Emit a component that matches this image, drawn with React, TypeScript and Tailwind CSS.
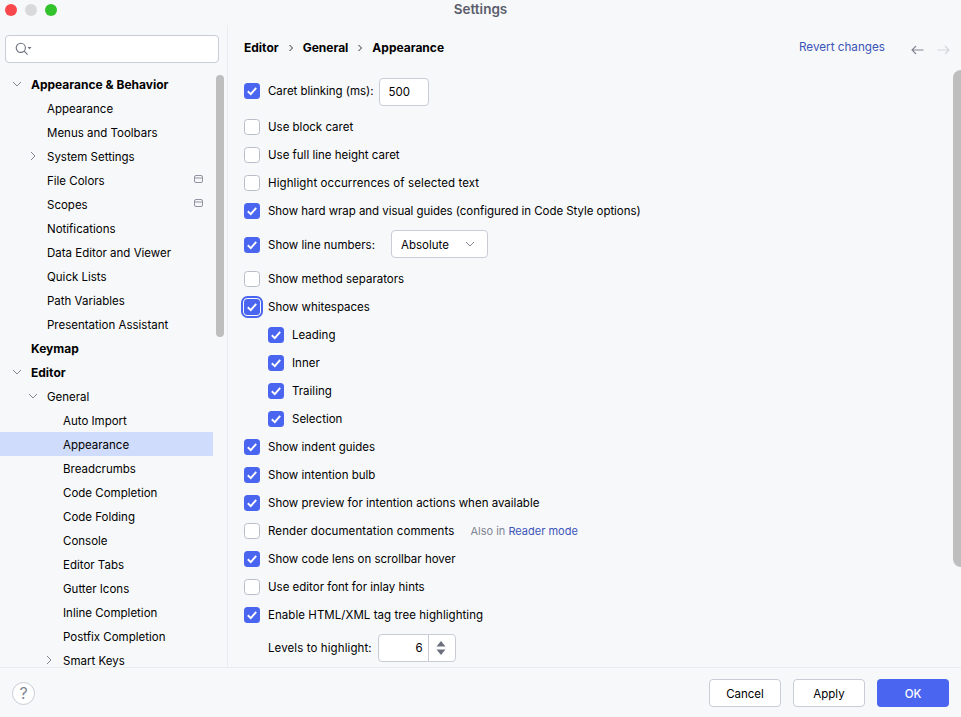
import React from "react";

type TreeRow = { label: string; level: 0 | 1 | 2; bold?: boolean; arrow?: "down" | "right"; pin?: boolean; selected?: boolean };

const tree: TreeRow[] = [
  { label: "Appearance & Behavior", level: 0, bold: true, arrow: "down" },
  { label: "Appearance", level: 1 },
  { label: "Menus and Toolbars", level: 1 },
  { label: "System Settings", level: 1, arrow: "right" },
  { label: "File Colors", level: 1, pin: true },
  { label: "Scopes", level: 1, pin: true },
  { label: "Notifications", level: 1 },
  { label: "Data Editor and Viewer", level: 1 },
  { label: "Quick Lists", level: 1 },
  { label: "Path Variables", level: 1 },
  { label: "Presentation Assistant", level: 1 },
  { label: "Keymap", level: 0, bold: true },
  { label: "Editor", level: 0, bold: true, arrow: "down" },
  { label: "General", level: 1, arrow: "down" },
  { label: "Auto Import", level: 2 },
  { label: "Appearance", level: 2, selected: true },
  { label: "Breadcrumbs", level: 2 },
  { label: "Code Completion", level: 2 },
  { label: "Code Folding", level: 2 },
  { label: "Console", level: 2 },
  { label: "Editor Tabs", level: 2 },
  { label: "Gutter Icons", level: 2 },
  { label: "Inline Completion", level: 2 },
  { label: "Postfix Completion", level: 2 },
  { label: "Smart Keys", level: 2, arrow: "right" },
];

function Chevron({ dir, className = "" }: { dir: "down" | "right"; className?: string }) {
  return (
    <svg width="10" height="10" viewBox="0 0 10 10" fill="none" className={className}>
      <path d={dir === "down" ? "M1 3 L5 7 L9 3" : "M3 1 L7 5 L3 9"} stroke="#818594" strokeWidth="1" />
    </svg>
  );
}

function Tree() {
  return (
    <div className="flex flex-col overflow-hidden flex-1 min-h-0">
      {tree.map((r, i) => (
        <div key={i} className={`relative h-[24px] shrink-0 flex items-center pt-[2px] w-[213px] ${r.selected ? "bg-[#d0dcfc]" : ""}`}>
          <div className={`flex items-center ${r.level === 0 ? "pl-[12px]" : r.level === 1 ? "pl-[28px]" : "pl-[44px]"}`}>
            <div className="w-[19px] shrink-0 flex items-center">
              {r.arrow ? <Chevron dir={r.arrow} className="-mt-[2px]" /> : null}
            </div>
            <span className={`whitespace-nowrap ${r.bold ? "font-bold text-[12px]" : "pt-[2px]"}`}>{r.label}</span>
          </div>
          {r.pin ? (
            <svg width="10" height="9" viewBox="0 0 10 9" fill="none" className="absolute left-[194px] top-[7px]">
              <rect x="0.5" y="0.5" width="8" height="7" rx="1.5" stroke="#8f93a3" />
              <path d="M1 3 H8" stroke="#8f93a3" />
            </svg>
          ) : null}
        </div>
      ))}
    </div>
  );
}

function Check({ on, focus }: { on: boolean; focus?: boolean }) {
  return (
    <span
      className={`relative shrink-0 w-[16px] h-[16px] rounded-[3.5px] flex items-center justify-center ${
        on ? "bg-[#4a65ef]" : "bg-white border border-[#b9bdc9]"
      } ${focus ? "outline-2 outline-offset-[1.5px] outline-[#4a65ef]" : ""}`}
    >
      {on ? (
        <svg width="12" height="12" viewBox="0 0 12 12" fill="none">
          <path d="M1.8 6.3 L4.8 9.2 L10.2 2.8" stroke="#ffffff" strokeWidth="1.9" />
        </svg>
      ) : null}
    </span>
  );
}

function Opt({ label, on = true, focus, sub, cls = "" }: { label: string; on?: boolean; focus?: boolean; sub?: boolean; cls?: string }) {
  return (
    <div className={`h-[28px] flex items-center gap-[8px] ${sub ? "pl-[24px]" : ""}`}>
      <Check on={on} focus={focus} />
      <span className={`whitespace-nowrap pt-[2px] ${cls}`}>{label}</span>
    </div>
  );
}

function Button({ label, primary }: { label: string; primary?: boolean }) {
  return (
    <button
      className={`w-[72px] h-[28px] pt-[4px] rounded-[4px] flex items-center justify-center ${
        primary ? "bg-[#4a65ef] text-white font-medium" : "bg-white border border-[#c9ccd6] text-black"
      }`}
    >
      {label}
    </button>
  );
}

export default function App() {
  return (
    <div
      className="w-[961px] h-[717px] bg-[#f7f8fa] text-[#000000] text-[11.5px] flex flex-col overflow-hidden"
      style={{ fontFamily: "Inter, sans-serif" }}
    >
      {/* title bar */}
      <div className="relative h-[25px] shrink-0 flex justify-center pt-[1px]">
        <div className="absolute left-[5px] top-[4px] flex gap-[8px]">
          <span className="w-[12px] h-[12px] rounded-full bg-[#f9484c]" />
          <span className="w-[12px] h-[12px] rounded-full bg-[#d9d9dc]" />
          <span className="w-[12px] h-[12px] rounded-full bg-[#32c22c]" />
        </div>
        <span className="text-[#5a5d6b] font-semibold text-[13.5px] leading-[17px]">Settings</span>
      </div>

      <div className="flex-1 min-h-0 flex">
        {/* sidebar */}
        <aside className="relative w-[228px] shrink-0 border-r border-[#ebecf0] flex flex-col pt-[10px]">
          <div className="mx-[5px] h-[28px] w-[214px] shrink-0 bg-white border border-[#c9ccd6] rounded-[4px] flex items-center pl-[9px]">
            <svg width="18" height="14" viewBox="0 0 18 14" fill="none">
              <circle cx="5.8" cy="5.8" r="4.6" stroke="#6c707e" strokeWidth="1.1" />
              <path d="M9.2 9.2 L12.6 12.6" stroke="#6c707e" strokeWidth="1.1" />
              <path d="M12.5 5 H16.5 L14.5 7.2 Z" fill="#6c707e" />
            </svg>
          </div>
          <div className="h-[9px] shrink-0" />
          <Tree />
          <div className="absolute left-[216px] top-[50px] w-[8px] h-[262px] rounded-full bg-[#bebebe]" />
        </aside>

        {/* content */}
        <main className="relative flex-1 min-w-0 flex flex-col">
          <div className="h-[44px] shrink-0 flex items-center pl-[16px] pr-[16px]">
            <div className="flex items-center font-bold text-[12px] pt-[2px]">
              <span>Editor</span>
              <svg width="6" height="8" viewBox="0 0 6 8" fill="none" className="mx-[9px]">
                <path d="M1.5 1 L4.5 4 L1.5 7" stroke="#2b2d30" strokeWidth="1" />
              </svg>
              <span>General</span>
              <svg width="6" height="8" viewBox="0 0 6 8" fill="none" className="ml-[9px] mr-[9px]">
                <path d="M1.5 1 L4.5 4 L1.5 7" stroke="#2b2d30" strokeWidth="1" />
              </svg>
              <span>Appearance</span>
            </div>
            <span className="ml-auto text-[#3b55b8] text-[11.7px] mr-[10px] pt-[2px]">Revert changes</span>
            <div className="flex items-center gap-[13px] ml-[16px] mr-[-5px] mt-[6px]">
              <svg width="13" height="10" viewBox="0 0 13 10" fill="none">
                <path d="M12.5 5 H1 M5 1 L1 5 L5 9" stroke="#818594" strokeWidth="1.1" />
              </svg>
              <svg width="13" height="10" viewBox="0 0 13 10" fill="none">
                <path d="M0.5 5 H12 M8 1 L12 5 L8 9" stroke="#d3d5db" strokeWidth="1.1" />
              </svg>
            </div>
          </div>

          <div className="flex-1 min-h-0 pl-[16px] flex flex-col">
            <div className="h-[44px] flex items-center">
              <Check on />
              <span className="ml-[8px] whitespace-nowrap pt-[2px] tracking-[-0.03px]">Caret blinking (ms):</span>
              <div className="ml-[5px] mt-[2px] w-[50px] h-[28px] bg-white border border-[#c9ccd6] rounded-[4px] flex items-center pl-[9px] pt-[2px]">500</div>
            </div>
            <Opt label="Use block caret" on={false} />
            <Opt label="Use full line height caret" on={false} />
            <Opt label="Highlight occurrences of selected text" on={false} cls="tracking-[0.1px]" />
            <Opt label="Show hard wrap and visual guides (configured in Code Style options)" cls="tracking-[-0.05px]" />
            <div className="h-[40px] flex items-center">
              <Check on />
              <span className="ml-[8px] whitespace-nowrap pt-[2px]">Show line numbers:</span>
              <div className="ml-[16px] mb-[2px] w-[97px] h-[28px] bg-white border border-[#c9ccd6] rounded-[4px] flex items-center pl-[9px] pr-[12px] justify-between">
                <span className="pt-[4px]">Absolute</span>
                <svg width="10" height="10" viewBox="0 0 10 10" fill="none">
                  <path d="M1 3 L5 7 L9 3" stroke="#818594" strokeWidth="1" />
                </svg>
              </div>
            </div>
            <Opt label="Show method separators" on={false} />
            <Opt label="Show whitespaces" focus />
            <Opt label="Leading" sub />
            <Opt label="Inner" sub />
            <Opt label="Trailing" sub />
            <Opt label="Selection" sub />
            <Opt label="Show indent guides" />
            <Opt label="Show intention bulb" />
            <Opt label="Show preview for intention actions when available" />
            <div className="h-[28px] flex items-center">
              <Check on={false} />
              <span className="ml-[8px] whitespace-nowrap pt-[2px] tracking-[0.1px]">Render documentation comments</span>
              <span className="ml-[16px] text-[11px] text-[#818594] whitespace-nowrap">
                Also in <span className="text-[#3b55b8]">Reader mode</span>
              </span>
            </div>
            <Opt label="Show code lens on scrollbar hover" />
            <Opt label="Use editor font for inlay hints" on={false} />
            <Opt label="Enable HTML/XML tag tree highlighting" cls="tracking-[0.05px]" />
            <div className="h-[38px] flex items-center pl-[24px]">
              <span className="whitespace-nowrap pt-[2px] tracking-[0.1px]">Levels to highlight:</span>
              <div className="ml-[6px] w-[78px] h-[28px] bg-white border border-[#c9ccd6] rounded-[4px] flex items-center">
                <span className="w-[50px] pr-[5px] pt-[2px] border-r border-[#c9ccd6] h-full flex items-center justify-end">6</span>
                <svg width="10" height="16" viewBox="0 0 10 16" fill="none" className="ml-[7px]">
                  <path d="M5 1 L9.5 6.5 H0.5 Z" fill="#6c707e" />
                  <path d="M5 15 L9.5 9.5 H0.5 Z" fill="#6c707e" />
                </svg>
              </div>
            </div>
          </div>
          <div className="absolute left-[725px] top-[45px] w-[8px] h-[497px] rounded-l-full bg-[#bebebe]" />
        </main>
      </div>

      {/* footer */}
      <footer className="h-[50px] shrink-0 border-t border-[#ebecf0] flex items-center px-[12px] pt-[1px]">
        <div className="w-[23px] h-[23px] rounded-full bg-white border border-[#c9ccd6] flex items-center justify-center text-[#818594] text-[16px]">?</div>
        <div className="ml-auto flex gap-[12px]">
          <Button label="Cancel" />
          <Button label="Apply" />
          <Button label="OK" primary />
        </div>
      </footer>
    </div>
  );
}
